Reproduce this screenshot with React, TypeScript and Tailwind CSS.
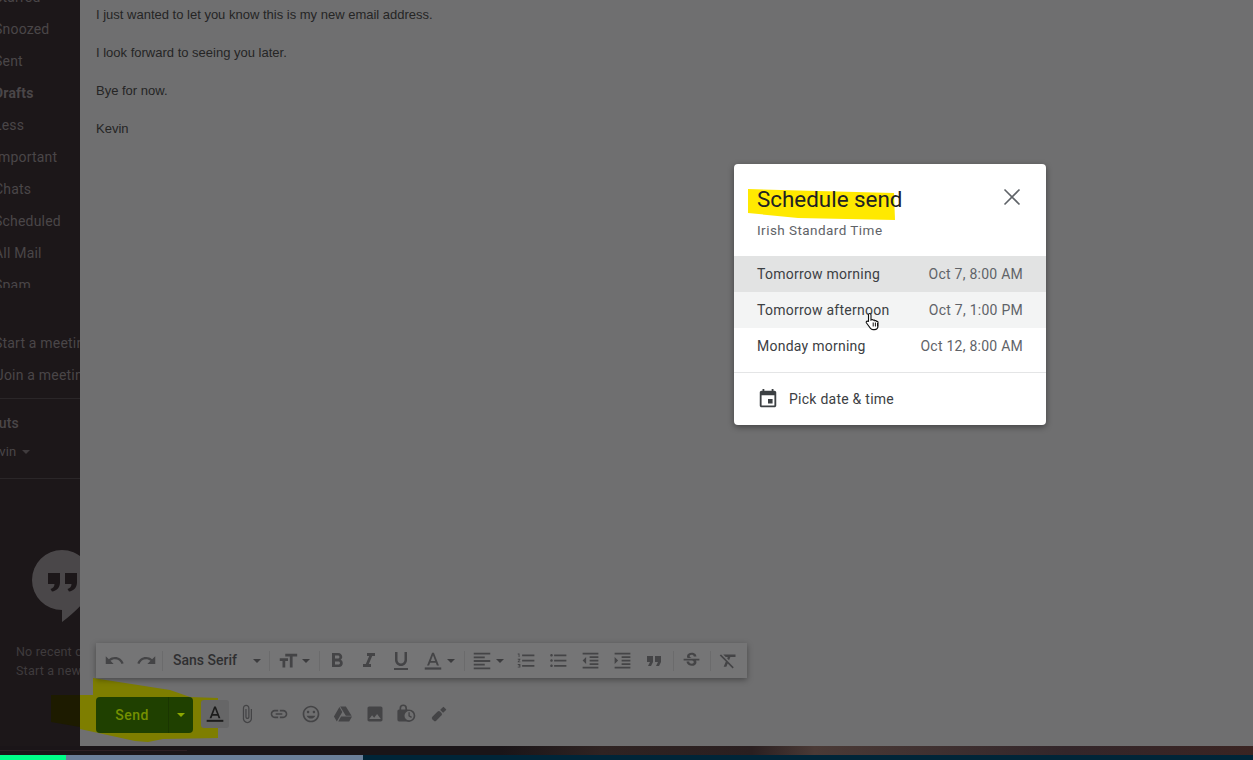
import React from "react";

const P = {
  undo: "M12.5 8c-2.65 0-5.05.99-6.9 2.6L2 7v9h9l-3.62-3.62c1.39-1.16 3.16-1.88 5.12-1.88 3.54 0 6.55 2.31 7.6 5.5l2.37-.78C21.08 11.03 17.15 8 12.5 8z",
  redo: "M18.4 10.6C16.55 8.99 14.15 8 11.5 8c-4.65 0-8.58 3.03-9.96 7.22L3.9 16c1.05-3.19 4.05-5.5 7.6-5.5 1.95 0 3.73.72 5.12 1.88L13 16h9V7l-3.6 3.6z",
  size: "M9 4v3h5v12h3V7h5V4H9zm-6 8h3v7h3v-7h3V9H3v3z",
  bold: "M15.6 10.79c.97-.67 1.65-1.77 1.65-2.79 0-2.26-1.75-4-4-4H7v14h7.04c2.09 0 3.71-1.7 3.71-3.79 0-1.52-.86-2.82-2.15-3.42zM10 6.5h3c.83 0 1.5.67 1.5 1.5s-.67 1.5-1.5 1.5h-3v-3zm3.5 9H10v-3h3.5c.83 0 1.5.67 1.5 1.5s-.67 1.5-1.5 1.5z",
  italic: "M10 4v3h2.21l-3.42 8H6v3h8v-3h-2.21l3.42-8H18V4z",
  underline: "M12 17c3.31 0 6-2.69 6-6V3h-2.5v8c0 1.93-1.57 3.5-3.5 3.5S8.5 12.93 8.5 11V3H6v8c0 3.31 2.69 6 6 6zm-7 2v2h14v-2H5z",
  color: "M11 3L5.5 17h2.25l1.12-3h6.25l1.12 3h2.25L13 3h-2zm-1.38 9L12 5.67 14.38 12H9.62z",
  align: "M15 15H3v2h12v-2zm0-8H3v2h12V7zM3 13h18v-2H3v2zm0 8h18v-2H3v2zM3 3v2h18V3H3z",
  numbered: "M2 17h2v.5H3v1h1v.5H2v1h3v-4H2v1zm1-9h1V4H2v1h1v3zm-1 3h1.8L2 13.1v.9h3v-1H3.2L5 10.9V10H2v1zm5-6v2h14V5H7zm0 14h14v-2H7v2zm0-6h14v-2H7v2z",
  bulleted: "M4 10.5c-.83 0-1.5.67-1.5 1.5s.67 1.5 1.5 1.5 1.5-.67 1.5-1.5-.67-1.5-1.5-1.5zm0-6c-.83 0-1.5.67-1.5 1.5S3.17 7.5 4 7.5 5.5 6.83 5.5 6 4.83 4.5 4 4.5zm0 12c-.83 0-1.5.68-1.5 1.5s.68 1.5 1.5 1.5 1.5-.68 1.5-1.5-.67-1.5-1.5-1.5zM7 19h14v-2H7v2zm0-6h14v-2H7v2zm0-8v2h14V5H7z",
  outdent: "M11 17h10v-2H11v2zm-8-5l4 4V8l-4 4zm0 9h18v-2H3v2zM3 3v2h18V3H3zm8 6h10V7H11v2zm0 4h10v-2H11v2z",
  indent: "M3 21h18v-2H3v2zM3 8v8l4-4-4-4zm8 9h10v-2H11v2zM3 3v2h18V3H3zm8 6h10V7H11v2zm0 4h10v-2H11v2z",
  quote: "M6 17h3l2-4V7H5v6h3zm8 0h3l2-4V7h-6v6h3z",
  strike: "M6.85 7.08C6.85 4.37 9.45 3 12.24 3c1.64 0 3 .49 3.9 1.28.77.65 1.46 1.73 1.46 3.24h-3.01c0-.31-.05-.59-.15-.85-.29-.86-1.2-1.28-2.25-1.28-1.86 0-2.34 1.02-2.34 1.7 0 .48.25.88.74 1.21.38.25.77.48 1.41.7H7.39c-.21-.34-.54-.89-.54-1.92zM21 12v-2H3v2h9.62c1.15.45 1.96.75 1.96 1.97 0 1-.81 1.67-2.28 1.67-1.54 0-2.93-.54-2.93-2.51H6.4c0 .55.08 1.13.24 1.58.81 2.29 3.29 3.3 5.67 3.3 2.27 0 5.3-.89 5.3-4.05 0-.3-.01-1.16-.48-1.96H21z",
  clear: "M3.27 5L2 6.27l6.97 6.97L6.5 19h3l1.57-3.66L16.73 21 18 19.73 3.55 5.27 3.27 5zM6 5v.18L8.82 8h2.4l-.72 1.68 2.1 2.1L14.21 8H20V5H6z",
  attach: "M16.5 6v11.5c0 2.21-1.79 4-4 4s-4-1.79-4-4V5c0-1.38 1.12-2.5 2.5-2.5s2.5 1.12 2.5 2.5v10.5c0 .55-.45 1-1 1s-1-.45-1-1V6H10v9.5c0 1.38 1.12 2.5 2.5 2.5s2.5-1.12 2.5-2.5V5c0-2.21-1.79-4-4-4S7 2.79 7 5v12.5c0 3.04 2.46 5.5 5.5 5.5s5.5-2.46 5.5-5.5V6h-1.5z",
  link: "M3.9 12c0-1.71 1.39-3.1 3.1-3.1h4V7H7c-2.76 0-5 2.24-5 5s2.24 5 5 5h4v-1.9H7c-1.71 0-3.1-1.39-3.1-3.1zM8 13h8v-2H8v2zm9-6h-4v1.9h4c1.71 0 3.1 1.39 3.1 3.1s-1.39 3.1-3.1 3.1h-4V17h4c2.76 0 5-2.24 5-5s-2.24-5-5-5z",
  smile: "M11.99 2C6.47 2 2 6.48 2 12s4.47 10 9.99 10C17.52 22 22 17.52 22 12S17.52 2 11.99 2zM12 20c-4.42 0-8-3.58-8-8s3.58-8 8-8 8 3.58 8 8-3.58 8-8 8zm3.5-9c.83 0 1.5-.67 1.5-1.5S16.33 8 15.5 8 14 8.67 14 9.5s.67 1.5 1.5 1.5zm-7 0c.83 0 1.5-.67 1.5-1.5S9.33 8 8.5 8 7 8.67 7 9.5 7.67 11 8.5 11zm3.5 6.5c2.33 0 4.31-1.46 5.11-3.5H6.89c.8 2.04 2.78 3.5 5.11 3.5z",
  drive: "M7.71 3.5L1.15 15l3.43 6 6.55-11.5L7.71 3.5zM9.73 15L6.3 21h13.12l3.43-6H9.73zM22.28 14L15.42 3H8.56l6.86 11h6.86z",
  image: "M21 19V5c0-1.1-.9-2-2-2H5c-1.1 0-2 .9-2 2v14c0 1.1.9 2 2 2h14c1.1 0 2-.9 2-2zM8.5 13.5l2.5 3.01L14.5 12l4.5 6H5l3.5-4.5z",
  calendar: "M17 12h-5v5h5v-5zM16 1v2H8V1H6v2H5c-1.11 0-1.99.9-1.99 2L3 19c0 1.1.89 2 2 2h14c1.1 0 2-.9 2-2V5c0-1.1-.9-2-2-2h-1V1h-2zm3 18H5V8h14v11z",
};

const Icon = ({ d, className = "w-5 h-5" }: { d: string; className?: string }) => (
  <svg viewBox="0 0 24 24" className={className} fill="currentColor"><path d={d} /></svg>
);
const Caret = ({ className = "text-[#3c3c3e]" }: { className?: string }) => (
  <svg viewBox="0 0 8 4" className={`w-2 h-1 ${className}`} fill="currentColor"><path d="M0 0h8L4 4z" /></svg>
);
const Divider = () => <div className="w-px h-5 bg-[#6b6b6c]" />;
const Btn = ({ d }: { d: string }) => (
  <div className="w-8 h-8 flex items-center justify-center"><Icon d={d} /></div>
);
const TBtn = ({ d, big }: { d: string; big?: boolean }) => (
  <div className="w-8 h-8 flex items-center justify-center"><Icon d={d} className={big ? "w-6 h-6" : "w-[21px] h-[21px]"} /></div>
);

const nav = ["Starred", "Snoozed", "Sent", "Drafts", "Less", "Important", "Chats", "Scheduled", "All Mail", "Spam"];

const Sidebar = () => (
  <aside className="relative w-20 h-[746px] shrink-0 overflow-hidden bg-[#1c1719] text-[14px] text-[#4a4648] font-['Roboto',sans-serif] tracking-[0.2px] whitespace-nowrap">
    <svg viewBox="0 0 29 33" className="absolute left-[51px] top-[695px] w-[29px] h-[33px]" aria-hidden="true">
      <path d="M0 0h29v32L0 27z" fill="#1d1b00" />
    </svg>
    <div className="h-[307px] -mt-[19px] overflow-hidden">
      {nav.map((n) => (
        <div key={n} className={`h-8 flex items-center -ml-[6px] ${n === "Drafts" ? "font-bold" : ""}`}>{n}</div>
      ))}
    </div>
    <div className="mt-[39px]">
      <div className="h-8 flex items-center -ml-[6px]">Start a meeting</div>
      <div className="h-8 flex items-center -ml-[4px]">Join a meeting</div>
    </div>
    <div className="h-px bg-[#2a2628] mt-[7px]" />
    <div className="h-[20px] mt-[14px] flex items-center -ml-[44px] font-medium">Shortcuts</div>
    <div className="h-[20px] mt-[9px] flex items-center gap-[6px] -ml-[16px] text-[13px]">
      Kevin <Caret className="text-[#3f3b3d]" />
    </div>
    <div className="h-px bg-[#2a2628] mt-[16px]" />
    <svg viewBox="0 0 60 74" className="mt-[71px] ml-[32px] w-[60px] h-[74px]" aria-hidden="true">
      <path d="M30 0a30 30 0 0 1 30 30c0 17-14 30-30 42V60A30 30 0 0 1 30 0z" fill="#4a4749" />
      <path d="M16 23h12v9.500c0 5-3.500 8.500-8 9l-1.500-2.500c2.500-.5 4-2.500 4-5H16zM33 23h12v9.500c0 5-3.500 8.500-8 9l-1.500-2.500c2.500-.5 4-2.500 4-5H33z" fill="#1c1719" />
    </svg>
    <div className="mt-[18px] ml-[16px] text-[12.5px] text-[#3f3b3d] leading-[19px]">
      <div>No recent chats</div>
      <div>Start a new one</div>
    </div>
  </aside>
);

const Body = () => (
  <div className="pt-[5px] pl-4 text-[13px] leading-[19px] text-[#252525] font-['Liberation_Sans',sans-serif]">
    <p>I just wanted to let you know this is my new email address.</p>
    <p className="mt-[18.5px]">I look forward to seeing you later.</p>
    <p className="mt-[19px]">Bye for now.</p>
    <p className="mt-[19px]">Kevin</p>
  </div>
);

const Toolbar = () => (
  <div className="relative ml-4 mt-auto w-[651px] h-[35px] pl-[2px] flex items-center bg-[#757576] shadow-[0_2px_6px_rgba(0,0,0,0.35)] text-[#444446]">
    <TBtn d={P.undo} />
    <TBtn d={P.redo} />
    <Divider />
    <div className="w-[106px] h-8 pl-[10px] pr-2 flex items-center justify-between text-[14px] font-medium text-[#2f2f31] font-['Roboto',sans-serif]">
      <span>Sans Serif</span>
      <Caret />
    </div>
    <Divider />
    <div className="w-[49px] h-8 pl-[7px] flex items-center gap-[3px]"><Icon d={P.size} className="w-[22px] h-[22px]" /><Caret /></div>
    <Divider />
    <div className="w-px" />
    <TBtn d={P.bold} big />
    <TBtn d={P.italic} big />
    <TBtn d={P.underline} big />
    <div className="w-[47px] h-8 pl-[5px] flex items-center gap-[3px]">
      <svg viewBox="0 0 24 24" className="w-[22px] h-[22px]" fill="currentColor"><path d={P.color} /><rect x="3" y="19" width="18" height="2.4" /></svg>
      <Caret />
    </div>
    <Divider />
    <div className="w-px" />
    <div className="w-[44px] h-8 pl-[5px] flex items-center gap-[3px]"><Icon d={P.align} className="w-[22px] h-[22px]" /><Caret /></div>
    <TBtn d={P.numbered} />
    <TBtn d={P.bulleted} />
    <TBtn d={P.outdent} />
    <TBtn d={P.indent} />
    <TBtn d={P.quote} big />
    <div className="w-[3px]" />
    <Divider />
    <div className="w-px" />
    <TBtn d={P.strike} />
    <div className="w-[3px]" />
    <Divider />
    <div className="w-px" />
    <TBtn d={P.clear} />
  </div>
);

const SendRow = () => (
  <div className="relative ml-4 mt-[19px] mb-[13px] h-9 flex items-center text-[#444446]">
    <div className="w-[97px] h-9 rounded-[4px] bg-[#1f4000] flex font-['Roboto',sans-serif]">
      <div className="w-[72px] flex items-center justify-center text-[14px] font-medium tracking-[0.5px] text-[#749000]">Send</div>
      <div className="w-px bg-[#1a3600]" />
      <div className="flex-1 flex items-center justify-center"><Caret className="text-[#8ca800]" /></div>
    </div>
    <div className="flex items-center pb-[2px]">
      <div className="ml-2 w-7 h-7 rounded-[3px] bg-[#666667] flex items-center justify-center text-[#1c1c1c]">
        <svg viewBox="0 0 24 24" className="w-5 h-5" fill="currentColor"><path d={P.color} /><rect x="2" y="19" width="20" height="2.4" /></svg>
      </div>
      <div className="w-[2px]" />
      <Btn d={P.attach} />
      <Btn d={P.link} />
      <Btn d={P.smile} />
      <Btn d={P.drive} />
      <Btn d={P.image} />
      <div className="w-8 h-8 flex items-center justify-center">
        <svg viewBox="0 0 24 24" className="w-5 h-5 overflow-visible" fill="currentColor">
          <path fillRule="evenodd" d="M3 6.500V5a4.500 4.500 0 0 1 9 0v1.500h.500a2 2 0 0 1 2 2V21h-12a2 2 0 0 1-2-2V8.500a2 2 0 0 1 2-2H3zm2 0h5V5a2.500 2.500 0 0 0-5 0v1.500z" />
          <circle cx="14.500" cy="14" r="6.500" fill="#6f6f70" stroke="currentColor" strokeWidth="2" />
          <path d="M14.500 10v4.300l3 1.800" fill="none" stroke="currentColor" strokeWidth="1.600" />
        </svg>
      </div>
      <div className="w-8 h-8 flex items-center justify-center">
        <svg viewBox="0 0 24 24" className="w-5 h-5" fill="currentColor">
          <g transform="rotate(45 12 12)">
            <rect x="8.750" y="9" width="6.500" height="13" rx="2" />
            <rect x="9.500" y="2" width="5" height="5.500" rx="0.500" />
          </g>
        </svg>
      </div>
    </div>
  </div>
);

const Row = ({ a, b, cls }: { a: string; b: string; cls?: string }) => (
  <div className={`h-9 px-[23px] flex items-center justify-between ${cls ?? ""}`}>
    <span className="text-[#3c4043]">{a}</span>
    <span className="text-[#5f6368]">{b}</span>
  </div>
);

const Modal = () => (
  <div className="absolute left-[734px] top-[164px] w-[312px] h-[261px] rounded-[4px] bg-white shadow-[0_2px_6px_rgba(0,0,0,0.4)] font-['Roboto',sans-serif] text-[14px] tracking-[0.25px]">
    <svg viewBox="0 0 148 34" className="absolute left-[14px] top-[24px] w-[148px] h-[34px]" aria-hidden="true">
      <path d="M0 1L146 5 147 32 50 30 0 25z" fill="#ffe900" />
    </svg>
    <svg viewBox="0 0 24 24" className="absolute left-[266px] top-[21px] w-6 h-6 text-[#5f6368]" fill="none" stroke="currentColor" strokeWidth="1.600">
      <path d="M4.500 4.500l15 15M19.500 4.500l-15 15" />
    </svg>
    <div className="relative h-[92px] pl-[23px] pt-[21px]">
      <div className="text-[22.400px] leading-[29px] tracking-normal text-[#202124]">Schedule send</div>
      <div className="mt-[7px] text-[13.500px] leading-[18px] tracking-[0.45px] text-[#5f6368]">Irish Standard Time</div>
    </div>
    <Row a="Tomorrow morning" b="Oct 7, 8:00 AM" cls="bg-[#e2e3e3]" />
    <Row a="Tomorrow afternoon" b="Oct 7, 1:00 PM" cls="bg-[#f3f4f4]" />
    <Row a="Monday morning" b="Oct 12, 8:00 AM" />
    <div className="h-px bg-[#e4e5e6] mt-2" />
    <div className="h-[52px] pl-[23px] flex items-center gap-[10px] text-[#3c4043]">
      <Icon d={P.calendar} className="w-[22px] h-[22px] text-[#3c4043]" />
      <span>Pick date &amp; time</span>
    </div>
    <svg viewBox="0 0 16 19" className="absolute left-[131px] top-[148px] w-4 h-[19px]" aria-hidden="true">
      <path d="M4.500 1.500c.9 0 1.500.6 1.500 1.500v5l.6-.3c.7-.3 1.300 0 1.600.5.600-.4 1.400-.2 1.700.5.700-.3 1.400 0 1.700.7.700-.3 1.400.2 1.400 1v3.600c0 2.400-1.600 3.600-3.600 3.600H8c-1.300 0-2-.6-2.700-1.500L1.500 11c-.7-1-.1-1.900.8-1.900.5 0 1 .3 1.200.7V3c0-.9.200-1.500 1-1.500z" fill="#fff" stroke="#111" strokeWidth="1.100" />
      <path d="M8.200 10.500v4M10.400 10.500v4M12.500 11v3.500" stroke="#111" strokeWidth="1" fill="none" />
    </svg>
  </div>
);

export default function App() {
  return (
    <div className="relative w-[1253px] h-[760px] overflow-hidden bg-[#1a1518]">
      <div className="flex h-[746px]">
        <Sidebar />
        <main className="relative flex-1 flex flex-col bg-[#6f6f70]">
          <svg viewBox="0 0 140 66" className="absolute left-0 top-[678px] w-[140px] h-[66px]" aria-hidden="true">
            <path d="M13 0L90 12 110 19 138 20 138 60 83 61 68 64 55 63 0 51 0 17 13 17z" fill="#7e7e00" />
          </svg>
          <Body />
          <Toolbar />
          <SendRow />
        </main>
      </div>
      <div className="h-[9px] pt-1 bg-[linear-gradient(90deg,#1a1518_0%,#1a1518_40%,#2f2322_48%,#2a1f20_60%,#4a3a36_65%,#33262a_85%,#3a2422_100%)]">
        <div className="w-[187px] h-px bg-[#2e2024]" />
      </div>
      <div className="flex h-[5px] bg-[#002538]">
        <div className="w-[66px] bg-[#00ff88]" />
        <div className="w-[297px] bg-[#6a7f99]" />
      </div>
      <Modal />
    </div>
  );
}
